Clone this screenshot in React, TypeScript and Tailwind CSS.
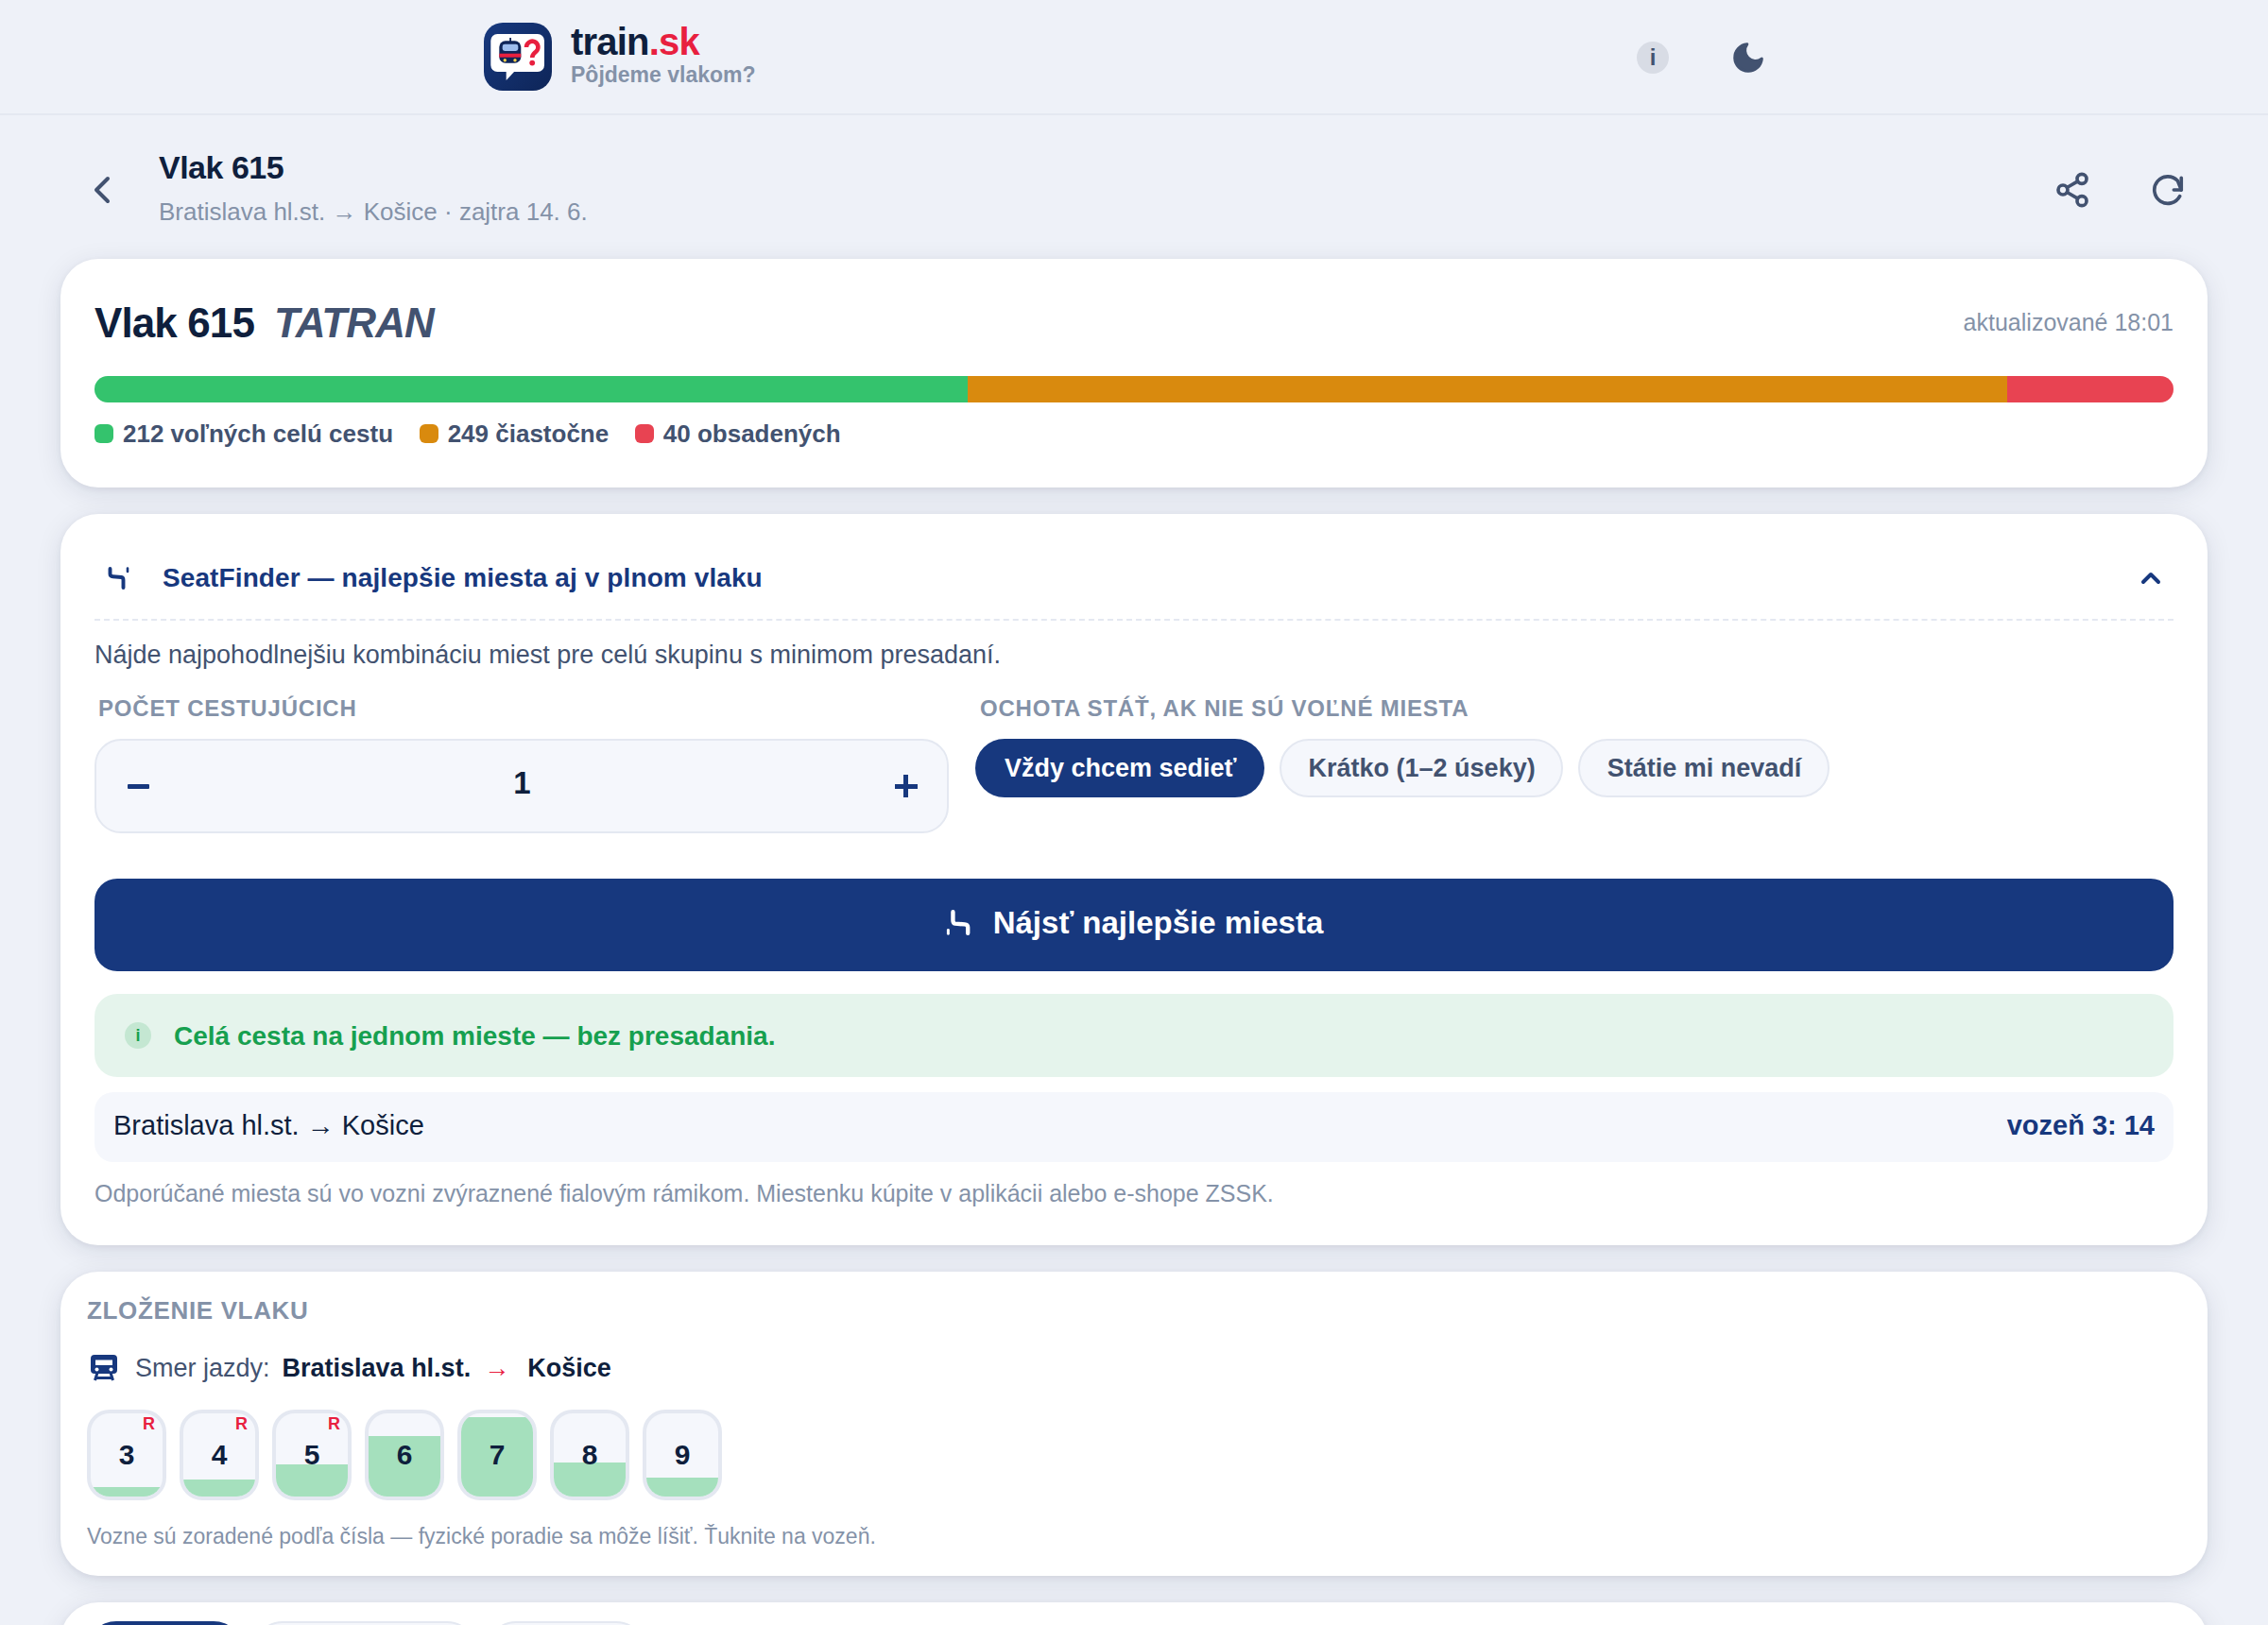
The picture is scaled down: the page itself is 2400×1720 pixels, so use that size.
import { ChevronLeft, ChevronUp, Share2 } from 'lucide-react'

const LABEL = 'text-[24px] font-bold tracking-[0.8px] text-[#8492a8] leading-none'
const CARD = 'rounded-[40px] bg-white shadow-[0_2px_6px_rgba(15,31,61,0.06),0_6px_28px_rgba(15,31,61,0.1)]'

const CARS = [
  { n: 3, fill: 'h-[11%]', r: true },
  { n: 4, fill: 'h-[20%]', r: true },
  { n: 5, fill: 'h-[39%]', r: true },
  { n: 6, fill: 'h-[73%]', r: false },
  { n: 7, fill: 'h-[95%]', r: false },
  { n: 8, fill: 'h-[41%]', r: false },
  { n: 9, fill: 'h-[23%]', r: false },
]

function Logo() {
  return (
    <svg width="72" height="72" viewBox="0 0 72 72" className="shrink-0">
      <defs>
        <linearGradient id="logo-bg" x1="0" y1="0" x2="1" y2="1">
          <stop offset="0" stopColor="#17397f" />
          <stop offset="1" stopColor="#0e2558" />
        </linearGradient>
      </defs>
      <rect width="72" height="72" rx="20" fill="url(#logo-bg)" />
      <rect x="7.3" y="12" width="56.7" height="40" rx="7" fill="#fff" />
      <path d="M23.7 50 V61 L33 51 Z" fill="#fff" />
      <rect x="27.2" y="16" width="1.8" height="5" fill="#0e2558" />
      <rect x="16.3" y="19.3" width="23" height="23.4" rx="6.5" fill="#0e2558" />
      <rect x="19.7" y="22.7" width="16.6" height="7.3" rx="2.4" fill="#9dbdee" />
      <rect x="16.3" y="32.7" width="23" height="4" fill="#e8203f" />
      <circle cx="22.3" cy="39.7" r="1.7" fill="#f5cf4a" />
      <circle cx="33" cy="39.7" r="1.7" fill="#f5cf4a" />
      <path d="M45 26a6.2 6.2 0 1 1 10.5 4.4c-2 2-4.3 3-4.3 6.6" fill="none" stroke="#e8203f" strokeWidth="4.6" />
      <circle cx="51.2" cy="42.6" r="2.9" fill="#e8203f" />
    </svg>
  )
}

function SeatIcon({ className }: { className?: string }) {
  return (
    <svg width="24" height="24" viewBox="0 0 24 24" fill="none" stroke="currentColor" strokeLinecap="round" className={className}>
      <path d="M2.5 2v5.5q0 2.5 3 2.8l9 .7q2 .4 2 3V22" strokeWidth="3.9" strokeLinejoin="round" />
      <path d="M21 1.5v3.5" strokeWidth="2.6" />
    </svg>
  )
}

function TrainIcon() {
  return (
    <svg width="28" height="28" viewBox="0 0 28 28" className="ml-[4px] shrink-0 text-[#17387e]">
      <rect width="28" height="20" rx="4" fill="currentColor" />
      <rect x="5" y="5.5" width="18" height="5.5" fill="#fff" />
      <circle cx="6.5" cy="15.5" r="2" fill="#fff" />
      <circle cx="21.5" cy="15.5" r="2" fill="#fff" />
      <path d="M7 19l-2.5 8M21 19l2.5 8M5.5 24.5h17" fill="none" stroke="currentColor" strokeWidth="3" />
    </svg>
  )
}

function InfoDot({ className }: { className: string }) {
  return <span className={`flex items-center justify-center rounded-full font-bold ${className}`}>i</span>
}

export default function App() {
  return (
    <div className="h-[1720px] overflow-hidden bg-[#eef1f8] font-['Liberation_Sans',Arial,sans-serif] text-[#0f1f3d]">
      <header className="h-[122px] border-b-2 border-[#e4e8f1]">
        <div className="mx-auto flex h-[120px] w-[1376px] items-center">
          <Logo />
          <div className="ml-5 flex flex-col pb-[4px]">
            <div className="text-[40px] font-bold leading-[40px] tracking-[-0.8px]">
              train<span className="text-[#e8203f]">.sk</span>
            </div>
            <div className="mt-[2px] text-[23px] font-bold leading-[26px] text-[#8492a8]">Pôjdeme vlakom?</div>
          </div>
          <InfoDot className="ml-auto mt-[2px] h-[34px] w-[34px] bg-[#d8dce5] text-[24px] text-[#425270]" />
          <svg width="38" height="38" viewBox="0 0 24 24" fill="#425270" stroke="#425270" strokeWidth="2" strokeLinejoin="round" className="ml-[65px] mr-[19px] mt-[2px]">
            <path d="M21 12.8A9 9 0 1 1 11.2 3a7 7 0 0 0 9.8 9.8Z" />
          </svg>
        </div>
      </header>

      <div className="flex h-[152px] items-center pl-[84px] pr-[87px] pt-[6px]">
        <ChevronLeft size={48} strokeWidth={2} className="text-[#425270]" />
        <div className="-mt-[5px] ml-[36px]">
          <div className="text-[34px] font-bold leading-[40px] tracking-[-0.5px]">Vlak 615</div>
          <div className="mt-[10px] text-[26px] leading-[34px] text-[#8492a8]">Bratislava hl.st. → Košice · zajtra 14. 6.</div>
        </div>
        <Share2 size={40} strokeWidth={2.2} className="ml-auto text-[#425270]" />
        <svg width="38" height="38" viewBox="0 0 24 24" fill="none" stroke="#425270" strokeWidth="2.3" strokeLinecap="round" strokeLinejoin="round" className="ml-[62px]">
          <path d="M20 16.2A9 9 0 1 1 18.5 5.8L21 12" />
          <path d="M21 4v8h-5" />
        </svg>
      </div>

      <main className="flex flex-col gap-[28px] px-[64px]">
        <section className={`h-[242px] px-[36px] pt-[42px] ${CARD}`}>
          <div className="flex items-center justify-between">
            <div className="flex items-baseline gap-[21px] text-[44px] font-bold leading-[52px] tracking-[-0.9px]">
              <span>Vlak 615</span>
              <span className="italic text-[#425270]">TATRAN</span>
            </div>
            <div className="text-[25px] text-[#8492a8]">aktualizované 18:01</div>
          </div>
          <div className="mt-[30px] flex h-[28px] overflow-hidden rounded-[14px]">
            <div className="w-[42%] bg-[#34c36d]" />
            <div className="w-[50%] bg-[#d98a0e]" />
            <div className="w-[8%] bg-[#e84352]" />
          </div>
          <div className="mt-[19px] flex items-center gap-[27.6px] text-[26px] font-bold leading-[28px] text-[#425270]">
            <span className="flex items-center gap-[10px]"><i className="h-[20px] w-[20px] rounded-[6px] bg-[#34c36d]" />212 voľných celú cestu</span>
            <span className="flex items-center gap-[10px]"><i className="h-[20px] w-[20px] rounded-[6px] bg-[#d98a0e]" />249 čiastočne</span>
            <span className="flex items-center gap-[10px]"><i className="h-[20px] w-[20px] rounded-[6px] bg-[#e84352]" />40 obsadených</span>
          </div>
        </section>

        <section className={`h-[774px] px-[36px] ${CARD}`}>
          <div className="flex h-[113px] items-center border-b-2 border-dashed border-[#e4e8f1] pt-[25px] text-[#17387e]">
            <SeatIcon className="ml-[14px]" />
            <span className="ml-[34px] text-[28px] font-bold tracking-[0.1px]">SeatFinder — najlepšie miesta aj v plnom vlaku</span>
            <ChevronUp size={32} strokeWidth={3} className="ml-auto mr-[8px]" />
          </div>
          <p className="mt-[19px] text-[27px] leading-[34px] text-[#425270]">Nájde najpohodlnejšiu kombináciu miest pre celú skupinu s minimom presadaní.</p>
          <div className="mt-[28px] flex gap-[28px]">
            <div className="w-[904px] shrink-0">
              <div className={`${LABEL} pl-[4px]`}>POČET CESTUJÚCICH</div>
              <div className="mt-[20px] flex h-[100px] items-center justify-between rounded-[28px] border-2 border-[#e4e8f1] bg-[#f5f7fc] pl-[33px] pr-[31px]">
                <i className="h-[5px] w-[23px] rounded-[1px] bg-[#17387e]" />
                <span className="-mt-[6px] text-[33px] font-bold">1</span>
                <span className="relative h-[24px] w-[24px]">
                  <i className="absolute left-0 top-[9.5px] h-[5px] w-[24px] bg-[#17387e]" />
                  <i className="absolute left-[9.5px] top-0 h-[24px] w-[5px] bg-[#17387e]" />
                </span>
              </div>
            </div>
            <div>
              <div className={`${LABEL} pl-[5px]`}>OCHOTA STÁŤ, AK NIE SÚ VOĽNÉ MIESTA</div>
              <div className="mt-[20px] flex gap-[16px] text-[27px] font-bold">
                <button className="h-[62px] rounded-full bg-[#17387e] pl-[31px] pr-[29px] text-white">Vždy chcem sedieť</button>
                <button className="h-[62px] rounded-full border-2 border-[#e4e8f1] bg-[#f5f7fc] pl-[29px] pr-[27px] text-[#425270]">Krátko (1–2 úseky)</button>
                <button className="h-[62px] rounded-full border-2 border-[#e4e8f1] bg-[#f5f7fc] pl-[29px] pr-[28px] text-[#425270]">Státie mi nevadí</button>
              </div>
            </div>
          </div>
          <button className="mt-[48px] flex h-[98px] w-full items-center justify-center gap-[24px] rounded-[24px] bg-[#17387e] pb-[5px] text-[33px] font-bold text-white">
            <SeatIcon className="h-[27px] w-[27px] rotate-180" />
            Nájsť najlepšie miesta
          </button>
          <div className="mt-[24px] flex h-[88px] items-center gap-[24px] rounded-[24px] bg-[#e5f4ec] px-[32px] pt-[2px] text-[28px] font-bold text-[#16a04f]">
            <InfoDot className="-mt-[2px] h-[28px] w-[28px] bg-[#c4e7d2] text-[18px]" />
            Celá cesta na jednom mieste — bez presadania.
          </div>
          <div className="mt-[16px] flex h-[74px] items-center justify-between rounded-[20px] bg-[#f5f7fc] px-[20px] pb-[2px] text-[29px]">
            <span>Bratislava hl.st. → Košice</span>
            <span className="font-bold text-[#17387e]">vozeň 3: 14</span>
          </div>
          <p className="mt-[18px] text-[25px] leading-[30px] text-[#8492a8]">Odporúčané miesta sú vo vozni zvýraznené fialovým rámikom. Miestenku kúpite v aplikácii alebo e-shope ZSSK.</p>
        </section>

        <section className={`h-[322px] px-[28px] pt-[26px] ${CARD}`}>
          <div className="text-[26px] font-bold leading-[30px] tracking-[0.65px] text-[#8492a8]">ZLOŽENIE VLAKU</div>
          <div className="mt-[29px] flex items-center text-[27px] leading-[34px]">
            <TrainIcon />
            <span className="ml-[19px] text-[#425270]">Smer jazdy:</span>
            <span className="ml-[13px] font-bold">Bratislava hl.st.</span>
            <span className="ml-[14px] text-[#e8203f]">→</span>
            <span className="ml-[19px] font-bold">Košice</span>
          </div>
          <div className="mt-[27px] flex gap-[14px]">
            {CARS.map((car) => (
              <div key={car.n} className="relative h-[96px] w-[84px] overflow-hidden rounded-[24px] border-4 border-[#e4e8f1] bg-[#f5f7fc]">
                <div className={`absolute inset-x-0 bottom-0 bg-[#a5e0bd] ${car.fill}`} />
                <div className="absolute inset-0 flex items-center justify-center pb-[1px] text-[30px] font-bold">{car.n}</div>
                {car.r && <div className="absolute right-[8px] top-[1px] text-[18px] font-bold leading-[20px] text-[#e8203f]">R</div>}
              </div>
            ))}
          </div>
          <p className="mt-[24px] text-[23px] leading-[28px] text-[#8492a8]">Vozne sú zoradené podľa čísla — fyzické poradie sa môže líšiť. Ťuknite na vozeň.</p>
        </section>

        <section className={`h-[120px] px-[28px] pt-[20px] ${CARD}`}>
          <div className="flex gap-[11px]">
            <div className="h-[62px] w-[165px] rounded-full bg-[#17387e]" />
            <div className="h-[62px] w-[236px] rounded-full border-2 border-[#e4e8f1] bg-[#f5f7fc]" />
            <div className="h-[62px] w-[168px] rounded-full border-2 border-[#e4e8f1] bg-[#f5f7fc]" />
          </div>
        </section>
      </main>
    </div>
  )
}
